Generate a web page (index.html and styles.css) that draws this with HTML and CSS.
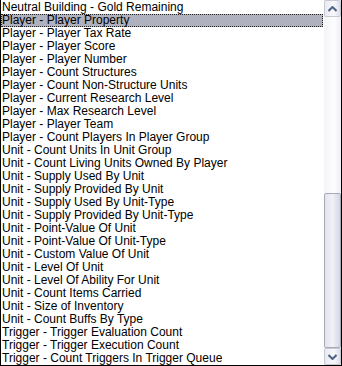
FILE: index.html
```html
<!DOCTYPE html>
<html lang="en">
<head>
    <title>Function List</title>
    <link rel="stylesheet" href="styles.css">
</head>
<body>
    <div class="listbox">
        <ul class="items">
            <li>Neutral Building - Gold Remaining</li>
            <li class="selected">Player - Player Property</li>
            <li>Player - Player Tax Rate</li>
            <li>Player - Player Score</li>
            <li>Player - Player Number</li>
            <li>Player - Count Structures</li>
            <li>Player - Count Non-Structure Units</li>
            <li>Player - Current Research Level</li>
            <li>Player - Max Research Level</li>
            <li>Player - Player Team</li>
            <li>Player - Count Players In Player Group</li>
            <li>Unit - Count Units In Unit Group</li>
            <li>Unit - Count Living Units Owned By Player</li>
            <li>Unit - Supply Used By Unit</li>
            <li>Unit - Supply Provided By Unit</li>
            <li>Unit - Supply Used By Unit-Type</li>
            <li>Unit - Supply Provided By Unit-Type</li>
            <li>Unit - Point-Value Of Unit</li>
            <li>Unit - Point-Value Of Unit-Type</li>
            <li>Unit - Custom Value Of Unit</li>
            <li>Unit - Level Of Unit</li>
            <li>Unit - Level Of Ability For Unit</li>
            <li>Unit - Count Items Carried</li>
            <li>Unit - Size of Inventory</li>
            <li>Unit - Count Buffs By Type</li>
            <li>Trigger - Trigger Evaluation Count</li>
            <li>Trigger - Trigger Execution Count</li>
            <li>Trigger - Count Triggers In Trigger Queue</li>
        </ul>
        <div class="scrollbar">
            <div class="arrow">
                <svg width="9" height="6" viewBox="0 0 9 6"><path d="M0.5 5 L4.5 1 L8.5 5" fill="none" stroke="#4d6185" stroke-width="2"/></svg>
            </div>
            <div class="track"></div>
            <div class="thumb"></div>
            <div class="arrow">
                <svg width="9" height="6" viewBox="0 0 9 6"><path d="M0.5 1 L4.5 5 L8.5 1" fill="none" stroke="#4d6185" stroke-width="2"/></svg>
            </div>
        </div>
    </div>
</body>
</html>
```

FILE: styles.css
```css
body {
    margin: 0;
    background: #ffffff;
}

.listbox {
    width: 342px;
    height: 366px;
    box-sizing: border-box;
    border-left: 1px solid #000;
    border-right: 1px solid #000;
    border-bottom: 1px solid #000;
    display: flex;
    overflow: hidden;
    font-family: "Liberation Sans", Arial, sans-serif;
    font-size: 12px;
}

.items {
    flex: 1;
    list-style: none;
    margin: 0;
    padding: 1px 1px 0 0;
}

.items li {
    height: 13px;
    line-height: 13px;
    padding-left: 1px;
    white-space: nowrap;
    box-sizing: border-box;
}

.items li.selected {
    background: #b0b1be;
    outline: 1px dotted #202020;
    outline-offset: -1px;
}

.scrollbar {
    width: 17px;
    display: flex;
    flex-direction: column;
    background: linear-gradient(to right, #f4f4f8, #fdfdfe 60%, #eeeef4);
}

.arrow {
    height: 17px;
    box-sizing: border-box;
    border: 1px solid #c6c8d2;
    border-radius: 2px;
    background: linear-gradient(to right, #e9ebf3, #f8f8fb 60%, #dcdeea);
    display: flex;
    align-items: center;
    justify-content: center;
}

.track {
    height: 176px;
}

.thumb {
    flex: 1;
    box-sizing: border-box;
    border: 1px solid #a7a9b6;
    border-radius: 2px;
    background: linear-gradient(to right, #e2e3ee, #f1f1f7 50%, #d4d6e4);
}
```
